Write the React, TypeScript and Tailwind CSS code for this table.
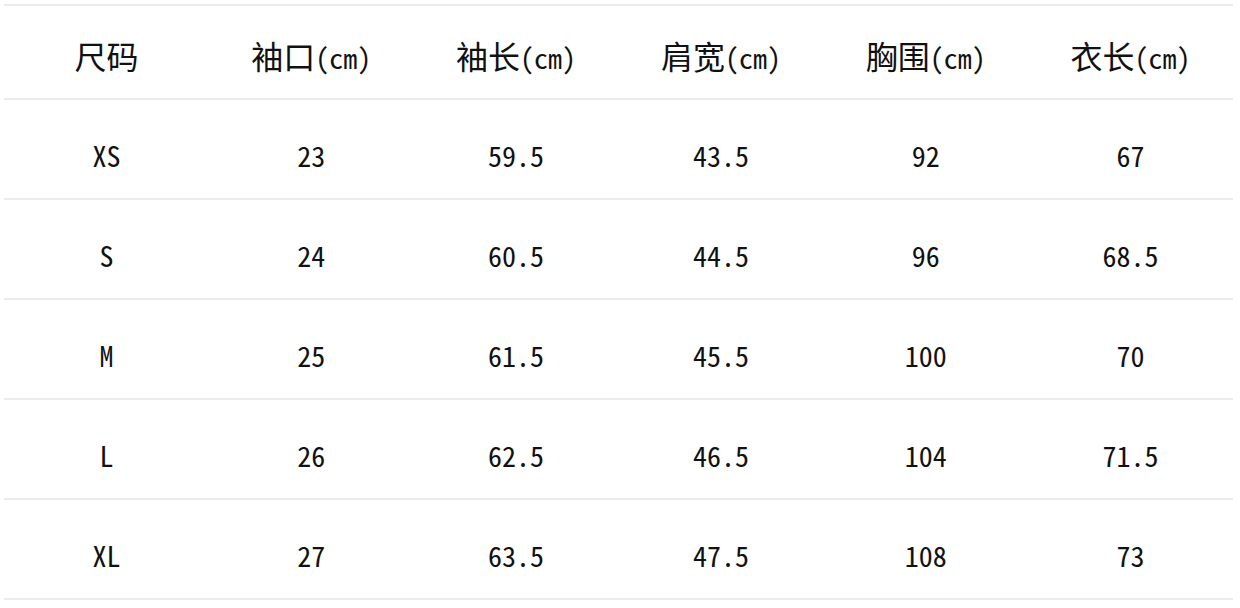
const HEADERS: [string, string][] = [
  ["尺码", ""],
  ["袖口", "(cm)"],
  ["袖长", "(cm)"],
  ["肩宽", "(cm)"],
  ["胸围", "(cm)"],
  ["衣长", "(cm)"],
];

const ROWS: string[][] = [
  ["XS", "23", "59.5", "43.5", "92", "67"],
  ["S", "24", "60.5", "44.5", "96", "68.5"],
  ["M", "25", "61.5", "45.5", "100", "70"],
  ["L", "26", "62.5", "46.5", "104", "71.5"],
  ["XL", "27", "63.5", "47.5", "108", "73"],
];

const font = {
  fontFamily: '"Noto Sans Mono CJK SC", "Noto Sans CJK SC", "DejaVu Sans Mono", monospace',
};

export default function App() {
  return (
    <div className="min-h-[608px] w-[1240px] bg-white pl-[4px] pt-[4px] text-[#111]" style={font}>
      <div className="w-[1229px] border-t-2 border-[#ececec]">
        {/* header */}
        <div className="grid h-[94px] grid-cols-6 items-center border-b-2 border-[#ececec]">
          {HEADERS.map(([zh, unit]) => (
            <div key={zh} className="pt-[5px] text-center font-light leading-none">
              <span className="text-[32px]">{zh}</span>
              {unit && <span className="text-[28px]">{unit}</span>}
            </div>
          ))}
        </div>
        {/* size rows */}
        {ROWS.map((row) => (
          <div
            key={row[0]}
            className="grid h-[100px] grid-cols-6 items-center border-b-2 border-[#ececec] text-[28px] font-light"
          >
            {row.map((cell, i) => (
              <div key={i} className="pt-[11px] text-center leading-none">
                {cell}
              </div>
            ))}
          </div>
        ))}
      </div>
    </div>
  );
}
